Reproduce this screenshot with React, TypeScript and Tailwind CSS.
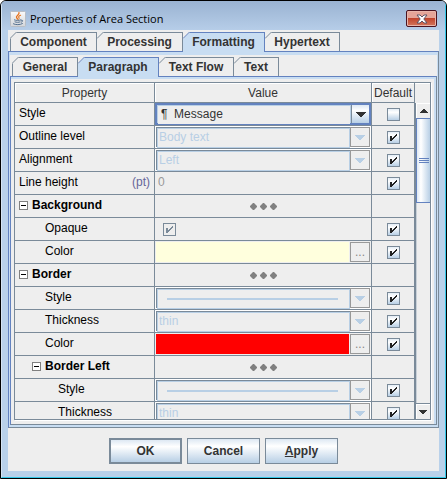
import React from 'react';
import { clsx } from 'clsx';

type TabInfo = { name: string; width: string; selected?: boolean };

const MAIN_TABS: TabInfo[] = [
  { name: 'Component', width: 'w-[87px]' },
  { name: 'Processing', width: 'w-[86px]' },
  { name: 'Formatting', width: 'w-[82px]', selected: true },
  { name: 'Hypertext', width: 'w-[75px]' },
];

const SUB_TABS: TabInfo[] = [
  { name: 'General', width: 'w-[66px]' },
  { name: 'Paragraph', width: 'w-[81px]', selected: true },
  { name: 'Text Flow', width: 'w-[75px]' },
  { name: 'Text', width: 'w-[45px]' },
];

function Tab({ tab, first }: { tab: TabInfo; first: boolean }) {
  const sel = tab.selected;
  return (
    <button
      role="tab"
      aria-selected={!!sel}
      className={clsx(
        'relative border-t border-r text-center font-bold text-[#333333]',
        tab.width,
        first && 'border-l',
        sel
          ? 'z-10 h-5 border-[#6382bf] bg-[#c8ddf2] pb-px'
          : 'h-[19px] border-[#7a8a99] bg-[#eeeeee]',
      )}
    >
      <svg
        className={clsx('absolute -top-px', first ? '-left-px' : 'left-0')}
        width="7"
        height="7"
        viewBox="0 0 7 7"
        aria-hidden="true"
      >
        <path d="M0 0H7L0 7Z" fill="#eeeeee" />
        <path d="M0 6.5L6.5 0" stroke={sel ? '#6382bf' : '#7a8a99'} />
      </svg>
      {tab.name}
    </button>
  );
}

function TabRow({ tabs, className, label }: { tabs: TabInfo[]; className: string; label: string }) {
  return (
    <div role="tablist" aria-label={label} className={clsx('flex h-[19px] items-start', className)}>
      {tabs.map((t, i) => (
        <Tab key={t.name} tab={t} first={i === 0} />
      ))}
    </div>
  );
}

function CheckBox({ label, checked, disabled }: { label: string; checked?: boolean; disabled?: boolean }) {
  return (
    <span className="inline-grid align-top">
      <input
        type="checkbox"
        aria-label={label}
        defaultChecked={checked}
        disabled={disabled}
        className={clsx(
          'peer col-start-1 row-start-1 size-[13px] appearance-none border border-[#7a8a99]',
          !disabled && 'bg-linear-to-b from-[#e4edf6] via-white via-30% to-[#b8cfe5]',
        )}
      />
      <svg
        className={clsx(
          'pointer-events-none invisible col-start-1 row-start-1 peer-checked:visible',
          disabled ? 'fill-[#7a8a99]' : 'fill-[#222222]',
        )}
        width="13"
        height="13"
        viewBox="0 0 13 13"
        shapeRendering="crispEdges"
        aria-hidden="true"
      >
        <path d="M3 5h2v5H3zM5 7h1v2H5zM6 6h1v2H6zM7 5h1v2H7zM8 4h1v2H8zM9 3h1v2H9z" />
      </svg>
    </span>
  );
}

function Arrow({ up, className }: { up?: boolean; className: string }) {
  return (
    <svg
      width={up ? 8 : 10}
      height={up ? 4 : 5}
      viewBox={up ? '1 0 8 4' : '0 0 10 5'}
      className={className}
      shapeRendering="crispEdges"
      aria-hidden="true"
    >
      <path d={up ? 'M4 0h2v1h1v1h1v1h1v1H1V3h1V2h1V1h1z' : 'M0 0h10v1H9v1H8v1H7v1H6v1H4V4H3V3H2V2H1V1H0z'} />
    </svg>
  );
}

function Combo({ label, value, line, active }: { label: string; value?: string; line?: boolean; active?: boolean }) {
  return (
    <div className={clsx('flex h-[22px]', active ? 'border-2 border-[#6382bf]' : 'border border-white')}>
      <div
        className={clsx(
          'grid min-w-0 flex-1 border',
          active ? 'border-[#b8cfe5]' : 'border-r-0 border-[#7a8a99]',
        )}
      >
        <select
          aria-label={label}
          disabled={!active}
          className={clsx(
            'col-start-1 row-start-1 w-full appearance-none pb-0.5 text-xs leading-4 opacity-100',
            active
              ? 'bg-[#eeeeee] pl-[3px] text-[#333333]'
              : 'border border-[#b8cfe5] bg-[#eeeeee] pl-px text-[#b8cfe5]',
          )}
        >
          <option>{value ?? ''}</option>
        </select>
        {line && (
          <span className="pointer-events-none col-start-1 row-start-1 mr-3 ml-2.5 h-0.5 self-center bg-[#b8cfe5]" />
        )}
      </div>
      <span
        className={clsx(
          'pointer-events-none flex items-center justify-center',
          active
            ? 'w-[18px] border-l border-[#7a8a99] bg-linear-to-b from-[#dde8f3] via-white via-30% to-[#b8cfe5]'
            : 'w-5 border border-[#999999]',
        )}
      >
        <Arrow className={active ? 'fill-[#333333]' : 'fill-[#b8cfe5]'} />
      </span>
    </div>
  );
}

function ColorField({ swatch, label }: { swatch: string; label: string }) {
  return (
    <div className="flex h-[22px] p-px">
      <span className={clsx('mr-px flex-1', swatch)} />
      <button
        aria-label={label}
        className="w-5 border border-[#999999] text-center text-xs leading-[18px] text-[#888888]"
      >
        ...
      </button>
    </div>
  );
}

function Dots() {
  return (
    <svg className="mx-auto" width="27" height="7" viewBox="0 0 27 7" fill="#808080" aria-hidden="true">
      <path d="M3 0h1l3 3v1l-3 3H3L0 4V3zM13 0h1l3 3v1l-3 3h-1l-3-3V3zM23 0h1l3 3v1l-3 3h-1l-3-3V3z" />
    </svg>
  );
}

type Row = {
  name: string;
  indent: string;
  unit?: string;
  group?: boolean;
  value?: React.ReactNode;
  checked?: boolean;
};

const ROWS: Row[] = [
  {
    name: 'Style',
    indent: 'pl-1',
    value: <Combo label="Style" value={'\u00b6\u00a0\u00a0Message'} active />,
    checked: false,
  },
  { name: 'Outline level', indent: 'pl-1', value: <Combo label="Outline level" value="Body text" />, checked: true },
  { name: 'Alignment', indent: 'pl-1', value: <Combo label="Alignment" value="Left" />, checked: true },
  {
    name: 'Line height',
    indent: 'pl-1',
    unit: '(pt)',
    value: (
      <input
        aria-label="Line height"
        disabled
        defaultValue="0"
        className="block h-[22px] w-full px-[3px] pb-0.5 text-xs text-[#999999]"
      />
    ),
    checked: true,
  },
  { name: 'Background', indent: 'pl-1', group: true },
  {
    name: 'Opaque',
    indent: 'pl-[30px]',
    value: (
      <div className="flex pl-2">
        <CheckBox label="Opaque" checked disabled />
      </div>
    ),
    checked: true,
  },
  {
    name: 'Color',
    indent: 'pl-[30px]',
    value: <ColorField swatch="bg-[#ffffdd]" label="Choose background color" />,
    checked: true,
  },
  { name: 'Border', indent: 'pl-1', group: true },
  { name: 'Style', indent: 'pl-[30px]', value: <Combo label="Border style" line />, checked: true },
  { name: 'Thickness', indent: 'pl-[30px]', value: <Combo label="Border thickness" value="thin" />, checked: true },
  {
    name: 'Color',
    indent: 'pl-[30px]',
    value: <ColorField swatch="bg-[#ff0000]" label="Choose border color" />,
    checked: true,
  },
  { name: 'Border Left', indent: 'pl-[17px]', group: true },
  { name: 'Style', indent: 'pl-[43px]', value: <Combo label="Left border style" line />, checked: true },
  { name: 'Thickness', indent: 'pl-[43px]', value: <Combo label="Left border thickness" value="thin" />, checked: true },
];

function PropertyTable() {
  const cell = 'h-[23px] border-r border-b border-[#7a8a99]';
  const head = 'h-5 border-r border-b border-[#7a8a99] p-0 font-normal text-[#333333] shadow-[inset_1px_1px_0_#ffffff]';
  return (
    <table className="w-full table-fixed border-separate border-spacing-0 leading-4">
      <thead>
        <tr>
          <th className={clsx(head, 'w-[140px]')}>Property</th>
          <th className={head}>Value</th>
          <th className={clsx(head, 'w-[43px] overflow-hidden')}>Default</th>
        </tr>
      </thead>
      <tbody>
        {ROWS.map((r, i) => (
          <tr key={i}>
            <td className={clsx(cell, 'pt-0 pr-1 pb-0.5', r.indent)}>
              <div className="flex items-center">
                {r.group && (
                  <button
                    aria-label={`Collapse ${r.name}`}
                    className="mr-1 flex size-[9px] items-center justify-center border border-[#808080] bg-white"
                  >
                    <span className="h-px w-[5px] bg-black" />
                  </button>
                )}
                <span className={clsx('flex-1 text-black', r.group && 'font-bold')}>{r.name}</span>
                {r.unit && <span className="text-[#666699]">{r.unit}</span>}
              </div>
            </td>
            <td className={clsx(cell, 'p-0')}>{r.group ? <Dots /> : r.value}</td>
            <td className={clsx(cell, 'p-0 text-center')}>
              {!r.group && (
                <div className="flex justify-center">
                  <CheckBox label={`${r.name} default`} checked={r.checked} />
                </div>
              )}
            </td>
          </tr>
        ))}
      </tbody>
    </table>
  );
}

function ScrollBar() {
  return (
    <div className="flex w-[15px] shrink-0 flex-col">
      <div className="h-5 border-t border-white" />
      <div className="flex min-h-0 flex-1 flex-col border-l border-[#7a8a99]">
        <button
          aria-label="Scroll up"
          className="flex h-[15px] shrink-0 items-center justify-center border-t border-l border-white"
        >
          <Arrow up className="fill-[#333333]" />
        </button>
        <div className="flex h-[85px] shrink-0 flex-col items-center justify-center gap-px border-y border-l border-[#6382bf] bg-linear-to-r from-[#dde8f3] via-white via-30% to-[#b8cfe5]">
          <span className="h-px w-2.5 bg-[#6382bf]" />
          <span className="h-px w-2.5 bg-[#6382bf]" />
          <span className="h-px w-2.5 bg-[#6382bf]" />
        </div>
        <div className="flex-1 border-l border-[#c8d0d8]" />
        <button
          aria-label="Scroll down"
          className="flex h-4 shrink-0 items-center justify-center border-t border-[#7a8a99] shadow-[inset_1px_1px_0_#ffffff]"
        >
          <svg width="8" height="4" viewBox="0 0 8 4" fill="#333333" shapeRendering="crispEdges" aria-hidden="true">
            <path d="M0 0h8v1H7v1H6v1H5v1H3V3H2V2H1V1H0z" />
          </svg>
        </button>
      </div>
    </div>
  );
}

function JavaIcon() {
  return (
    <svg width="16" height="16" viewBox="0 0 16 16" aria-hidden="true">
      <defs>
        <linearGradient id="java-bg" x1="0" y1="0" x2="0" y2="1">
          <stop offset="0" stopColor="#fafafa" />
          <stop offset="1" stopColor="#d3d6da" />
        </linearGradient>
      </defs>
      <rect x="0.5" y="0.5" width="15" height="15" rx="1" fill="url(#java-bg)" stroke="#b9bec5" />
      <g fill="none" strokeLinecap="round">
        <path d="M9 1.8C9.6 4 5.6 4.6 6.6 6.6L8 8.4" stroke="#e8731c" strokeWidth="1.4" />
        <path d="M10.6 4.2C8.2 5.2 8.4 6 9.2 7.2" stroke="#e8731c" strokeWidth="1.1" />
        <path
          d="M4.4 8.9C6 9.6 9 9.6 10.8 8.9M5 10.9C6.4 11.5 8.8 11.5 10 10.9M3.4 12.8C5.6 14 10 14 12.4 12.6M11.2 9.2C13.4 8.6 13.2 10.8 11.2 11.2"
          stroke="#54708f"
        />
      </g>
    </svg>
  );
}

function TitleBar() {
  return (
    <header className="flex h-[29px] shrink-0 items-start bg-linear-to-b from-[#9ab3d2] to-[#b6cde8] pr-2 pl-2">
      <span className="mt-2.5">
        <JavaIcon />
      </span>
      <h1 className="mt-2.5 ml-1 flex-1 font-['Open_Sans','Noto_Sans',sans-serif] text-[11px] leading-4 text-black">
        Properties of Area Section
      </h1>
      <button
        aria-label="Close"
        className="mt-[9px] flex h-[17px] w-[31px] items-center justify-center rounded-xs border border-[#4b1420] bg-linear-to-b from-[#e5a598] from-45% via-[#c0442c] via-50% to-[#d3765c] shadow-[inset_0_0_0_1px_#e8b5aa]"
      >
        <svg width="12" height="10" viewBox="0 0 12 10" aria-hidden="true">
          <path
            d="M1 1h3l2 2 2-2h3L7.8 5 11 9H8L6 7 4 9H1l3.2-4z"
            fill="#ffffff"
            stroke="#5c5566"
            strokeWidth="1"
          />
        </svg>
      </button>
    </header>
  );
}

function DialogButton({ children, primary }: { children: React.ReactNode; primary?: boolean }) {
  return (
    <button
      className={clsx(
        'h-[26px] w-[73px] border-[#7a8a99] bg-linear-to-b from-[#dde8f3] via-white via-30% to-[#b8cfe5] font-bold text-[#333333]',
        primary ? 'border-2' : 'border',
      )}
    >
      {children}
    </button>
  );
}

export default function App() {
  return (
    <div className="h-screen bg-white font-['Liberation_Sans',Arial,sans-serif] text-xs leading-4">
      <div className="flex h-full flex-col overflow-hidden rounded-t-md border border-black bg-[#b9d1ea]">
        <div className="flex min-h-0 flex-1 flex-col border-r border-b border-l border-r-[#35c8e8] border-b-[#35c8e8] border-l-[#d5e4f3]">
          <TitleBar />
          <main className="mr-[6px] mb-[6px] ml-[6px] flex min-h-0 flex-1 flex-col bg-[#eeeeee] pt-0.5">
            <TabRow tabs={MAIN_TABS} className="pl-0.5" label="Sections" />
            <section className="flex min-h-0 flex-1 flex-col border border-t-[#6382bf] border-r-[#7a8a99] border-b-[#7a8a99] border-l-[#6382bf] bg-[#c8ddf2] px-px pt-[3px] pb-0.5">
              <div className="flex min-h-0 flex-1 flex-col bg-[#eeeeee] pt-0.5">
                <TabRow tabs={SUB_TABS} className="pl-0.5" label="Formatting" />
                <section className="flex min-h-0 flex-1 flex-col border border-t-[#6382bf] border-r-[#7a8a99] border-b-[#7a8a99] border-l-[#6382bf] bg-[#eeeeee]">
                  <div className="flex min-h-0 flex-1 border-t-2 border-r-2 border-[#c8ddf2] px-[3px] pt-[3px] pb-1">
                    <div className="flex min-w-0 flex-1 border border-[#7a8a99] shadow-[1px_1px_0_#ffffff]">
                      <div className="min-w-0 flex-1 overflow-hidden">
                        <PropertyTable />
                      </div>
                      <ScrollBar />
                    </div>
                  </div>
                </section>
              </div>
            </section>
            <footer className="flex shrink-0 justify-center gap-[5px] pt-2.5 pb-[7px]">
              <DialogButton primary>OK</DialogButton>
              <DialogButton>Cancel</DialogButton>
              <DialogButton>
                <span className="underline">A</span>pply
              </DialogButton>
            </footer>
          </main>
        </div>
      </div>
    </div>
  );
}
